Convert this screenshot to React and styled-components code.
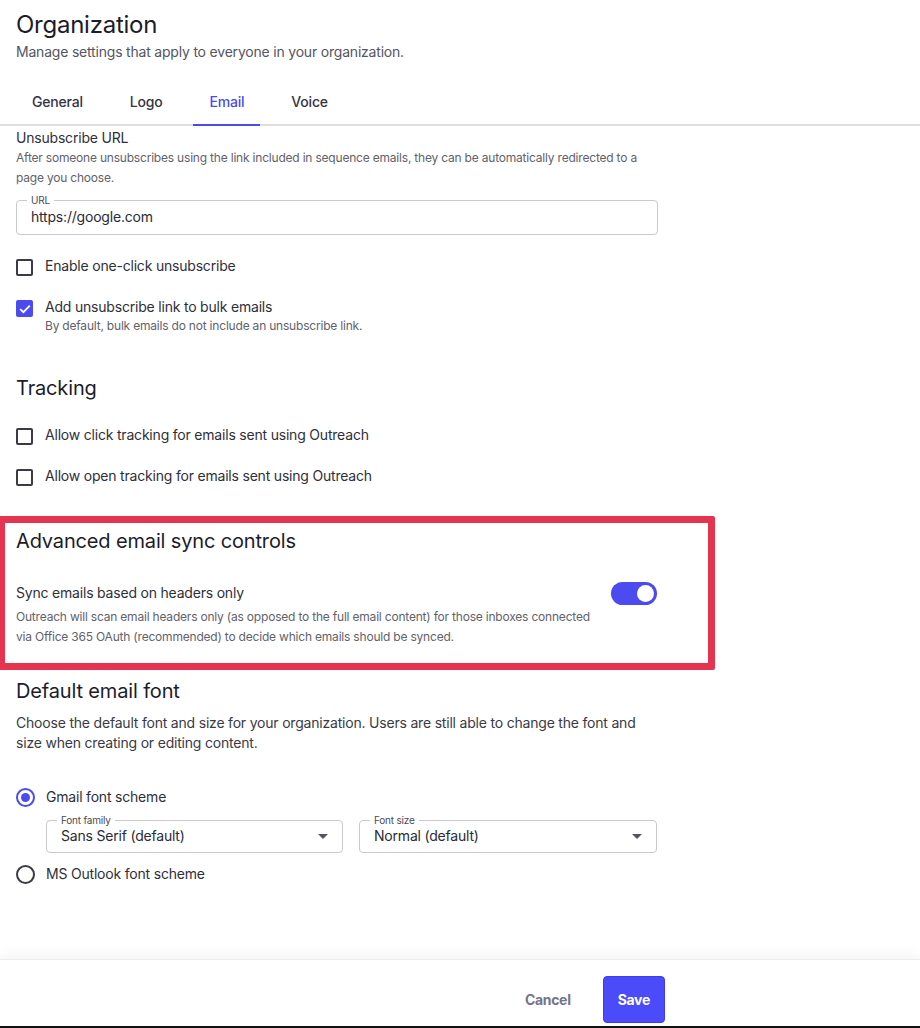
import React from "react";
import styled, { createGlobalStyle } from "styled-components";

const Global = createGlobalStyle`
  html, body { margin: 0; padding: 0; background: #fff; }
  body {
    font-family: Inter, "Liberation Sans", Arial, sans-serif;
    color: #2b2b38;
    letter-spacing: -0.2px;
    overflow: hidden;
  }
  * { box-sizing: border-box; }
`;

const Page = styled.div`
  height: 1028px;
  display: flex;
  flex-direction: column;
`;

const Header = styled.header`
  padding: 9px 16px 0;
`;

const Title = styled.h1`
  margin: 0;
  font-size: 24px;
  line-height: 32px;
  font-weight: 400;
  letter-spacing: -0.25px;
  color: #1c1c2b;
`;

const Subtitle = styled.p`
  margin: 1px 0 0;
  font-size: 14px;
  line-height: 20px;
  color: #55555f;
`;

const Tabs = styled.nav`
  margin-top: 16px;
  display: flex;
  gap: 15px;
  padding: 0 16px;
  border-bottom: 2px solid #dedede;
`;

const Tab = styled.div`
  height: 48px;
  padding: 0 16px;
  display: flex;
  align-items: center;
  font-size: 14px;
  font-weight: 500;
  color: ${(p) => (p.$active ? "#4a4af0" : "#34343f")};
  border-bottom: 2px solid ${(p) => (p.$active ? "#4a4af0" : "transparent")};
  margin-bottom: -2px;
`;

const Content = styled.main`
  padding: 2px 16px 0;
  width: 674px;
`;

const Label = styled.div`
  font-size: 14px;
  line-height: 20px;
  color: #2f2f3a;
`;

const Help = styled.div`
  font-size: 12px;
  line-height: ${(p) => p.$lh || 20}px;
  color: #62626c;
  margin-top: ${(p) => p.$mt || 0}px;
`;

const Field = styled.fieldset`
  margin: ${(p) => p.$mt || 0}px 0 0;
  padding: 0 14px;
  height: ${(p) => p.$h || 35}px;
  border: 1px solid #c9c9cf;
  border-radius: 4px;
  display: flex;
  align-items: center;
  justify-content: space-between;
  min-width: 0;
`;

const Legend = styled.legend`
  font-size: 10px;
  line-height: 10px;
  color: #4a4a55;
  padding: 0 4px;
  margin-left: -4px;
`;

const FieldValue = styled.span`
  font-size: 14px;
  color: #2b2b36;
  margin-top: -6px;
`;

const Caret = styled.span`
  width: 0;
  height: 0;
  border-left: 5px solid transparent;
  border-right: 5px solid transparent;
  border-top: 5px solid #55555f;
  margin-top: -4px;
  margin-right: 0;
`;

const CheckRow = styled.label`
  display: flex;
  gap: 12px;
  align-items: flex-start;
  margin-top: ${(p) => p.$mt || 0}px;
`;

const Box = styled.span`
  flex: none;
  width: 17px;
  height: 17px;
  margin-top: 3px;
  border-radius: 2px;
  border: 2px solid ${(p) => (p.$checked ? "#4b4bf0" : "#3b3b48")};
  background: ${(p) => (p.$checked ? "#4b4bf0" : "#fff")};
  display: flex;
  align-items: center;
  justify-content: center;
`;

const SectionTitle = styled.h2`
  margin: ${(p) => p.$mt || 0}px 0 0;
  font-size: 20px;
  line-height: 28px;
  font-weight: 400;
  letter-spacing: -0.15px;
  color: #1c1c2b;
`;

const Highlight = styled.section`
  margin: 30px 0 0 -18px;
  width: 717px;
  border: 7px solid #e5344f;
  border-radius: 2px;
  padding: 4px 51px 16px 11px;
`;

const SettingRow = styled.div`
  margin-top: 28px;
  display: flex;
  justify-content: space-between;
  align-items: flex-start;
`;

const SettingText = styled.div`
  max-width: 592px;
`;

const Toggle = styled.span`
  flex: none;
  width: 46px;
  height: 23px;
  margin-top: -1px;
  border-radius: 12px;
  background: #4b4bf0;
  display: flex;
  align-items: center;
  justify-content: flex-end;
  padding-right: 3px;
`;

const Knob = styled.span`
  width: 17px;
  height: 17px;
  border-radius: 50%;
  background: #fff;
`;

const Body = styled.p`
  margin: 8px 0 0;
  font-size: 14px;
  line-height: 20px;
  color: #3a3a45;
`;

const RadioRow = styled.label`
  display: flex;
  gap: 11px;
  align-items: center;
  margin-top: ${(p) => p.$mt || 0}px;
`;

const Radio = styled.span`
  flex: none;
  width: 19px;
  height: 19px;
  border-radius: 50%;
  border: 2px solid ${(p) => (p.$checked ? "#4b4bf0" : "#3b3b48")};
  display: flex;
  align-items: center;
  justify-content: center;
  &::after {
    content: "";
    width: 9px;
    height: 9px;
    border-radius: 50%;
    background: ${(p) => (p.$checked ? "#4b4bf0" : "transparent")};
  }
`;

const SelectRow = styled.div`
  margin: 8px 0 0 30px;
  display: grid;
  grid-template-columns: 297px 298px;
  gap: 16px;
`;

const Footer = styled.footer`
  margin-top: auto;
  height: 69px;
  border-top: 1px solid #ececee;
  border-bottom: 2px solid #111;
  box-shadow: 0 -6px 10px rgba(0, 0, 0, 0.035);
  padding: 16px 0 0;
  display: flex;
  width: 920px;
`;

const FooterInner = styled.div`
  width: 665px;
  display: flex;
  justify-content: flex-end;
  align-items: center;
  gap: 15px;
  height: 47px;
`;

const Button = styled.button`
  font-family: inherit;
  font-size: 14px;
  font-weight: 700;
  letter-spacing: -0.3px;
  height: 47px;
  padding: 0 ${(p) => (p.$primary ? 14 : 16)}px;
  border-radius: 4px;
  cursor: pointer;
  border: 1px solid ${(p) => (p.$primary ? "#3c3cf0" : "transparent")};
  background: ${(p) => (p.$primary ? "#4b4bf9" : "transparent")};
  color: ${(p) => (p.$primary ? "#fff" : "#74748a")};
`;

const Check = () => (
  <svg width="12" height="10" viewBox="0 0 12 10">
    <path d="M1.2 5.2 L4.4 8.2 L10.8 1.6" fill="none" stroke="#fff" strokeWidth="1.8" />
  </svg>
);

const Checkbox = ({ checked, children, mt }) => (
  <CheckRow $mt={mt}>
    <Box $checked={checked}>{checked && <Check />}</Box>
    <div>{children}</div>
  </CheckRow>
);

export default function App() {
  return (
    <Page>
      <Global />
      <Header>
        <Title>Organization</Title>
        <Subtitle>Manage settings that apply to everyone in your organization.</Subtitle>
      </Header>
      <Tabs>
        <Tab>General</Tab>
        <Tab>Logo</Tab>
        <Tab $active>Email</Tab>
        <Tab>Voice</Tab>
      </Tabs>
      <Content>
        <Label>Unsubscribe URL</Label>
        <Help>
          After someone unsubscribes using the link included in sequence emails, they can be automatically redirected to a
          page you choose.
        </Help>
        <Field $mt={7} $h={40}>
          <Legend>URL</Legend>
          <FieldValue>https://google.com</FieldValue>
        </Field>

        <Checkbox mt={21}>
          <Label>Enable one-click unsubscribe</Label>
        </Checkbox>
        <Checkbox checked mt={21}>
          <Label>Add unsubscribe link to bulk emails</Label>
          <Help $lh={18}>By default, bulk emails do not include an unsubscribe link.</Help>
        </Checkbox>

        <SectionTitle $mt={39}>Tracking</SectionTitle>
        <Checkbox mt={23}>
          <Label>Allow click tracking for emails sent using Outreach</Label>
        </Checkbox>
        <Checkbox mt={21}>
          <Label>Allow open tracking for emails sent using Outreach</Label>
        </Checkbox>

        <Highlight>
          <SectionTitle>Advanced email sync controls</SectionTitle>
          <SettingRow>
            <SettingText>
              <Label>Sync emails based on headers only</Label>
              <Help $mt={4}>
                Outreach will scan email headers only (as opposed to the full email content) for those inboxes connected
                via Office 365 OAuth (recommended) to decide which emails should be synced.
              </Help>
            </SettingText>
            <Toggle>
              <Knob />
            </Toggle>
          </SettingRow>
        </Highlight>

        <SectionTitle $mt={7}>Default email font</SectionTitle>
        <Body>
          Choose the default font and size for your organization. Users are still able to change the font and size when
          creating or editing content.
        </Body>

        <RadioRow $mt={34}>
          <Radio $checked />
          <Label>Gmail font scheme</Label>
        </RadioRow>
        <SelectRow>
          <Field $h={38}>
            <Legend>Font family</Legend>
            <FieldValue>Sans Serif (default)</FieldValue>
            <Caret />
          </Field>
          <Field $h={38}>
            <Legend>Font size</Legend>
            <FieldValue>Normal (default)</FieldValue>
            <Caret />
          </Field>
        </SelectRow>
        <RadioRow $mt={11}>
          <Radio />
          <Label>MS Outlook font scheme</Label>
        </RadioRow>
      </Content>
      <Footer>
        <FooterInner>
          <Button>Cancel</Button>
          <Button $primary>Save</Button>
        </FooterInner>
      </Footer>
    </Page>
  );
}
